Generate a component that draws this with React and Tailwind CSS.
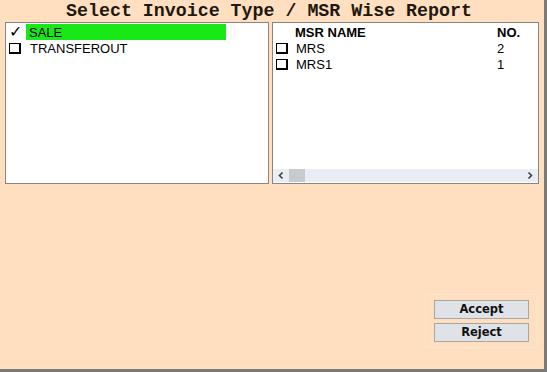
import React from 'react';

const Box = () => (
  <span className="inline-block w-[12px] h-[11px] border border-black border-r-[2px] border-b-[2px] bg-white shrink-0" />
);

const Chev = ({ dir }) => (
  <svg width="16" height="13" viewBox="0 0 16 13" className="shrink-0">
    <path d={dir === 'l' ? 'M9.5 3.5 L6.5 6.5 L9.5 9.5' : 'M6.5 3.5 L9.5 6.5 L6.5 9.5'} fill="none" stroke="#404040" strokeWidth="1.6" />
  </svg>
);

export default function App() {
  return (
    <div className="w-[547px] h-[372px] bg-[#ffdfc0] border-r-[3px] border-b-[3px] border-[#7a7a7a] flex flex-col" style={{ fontFamily: '"Liberation Sans", Arial, sans-serif' }}>
      {/* title */}
      <div className="h-[22px] flex items-center justify-center pr-[6px] text-[18.3px] font-bold text-[#201810] leading-none" style={{ fontFamily: '"Liberation Mono", "Courier New", monospace' }}>
        Select Invoice Type / MSR Wise Report
      </div>

      <div className="flex gap-[3px] px-[5px]">
        {/* invoice type list */}
        <div className="w-[265px] h-[162px] bg-white border border-[#8a8580] pt-[1px] text-[13px] text-black">
          <div className="h-[16px] flex items-center">
            <span className="w-[20px] pl-[3px] text-[16px] leading-none">✓</span>
            <span className="w-[200px] h-[16px] bg-[#18e818] pl-[3px] flex items-center leading-none">SALE</span>
          </div>
          <div className="h-[16px] flex items-center pl-[3px] gap-[9px] leading-none">
            <Box />
            <span>TRANSFEROUT</span>
          </div>
        </div>

        {/* msr list */}
        <div className="w-[268px] h-[162px] bg-white border border-[#8a8580] flex flex-col text-[13px] text-black">
          <div className="flex-1">
            <div className="h-[17px] flex items-end font-bold leading-none pb-[1px]">
              <span className="pl-[22px] w-[224px]">MSR NAME</span>
              <span>NO.</span>
            </div>
            {[['MRS', '2'], ['MRS1', '1']].map(([n, c]) => (
              <div key={n} className="h-[16px] flex items-center leading-none">
                <span className="w-[224px] flex items-center gap-[8px] pl-[3px]">
                  <Box />
                  <span>{n}</span>
                </span>
                <span>{c}</span>
              </div>
            ))}
          </div>
          <div className="h-[13px] mb-[1px] bg-[#e8eef3] flex items-center">
            <Chev dir="l" />
            <span className="w-[16px] h-[13px] bg-[#c6cbd0]" />
            <span className="flex-1" />
            <Chev dir="r" />
          </div>
        </div>
      </div>

      <div className="flex-1 flex justify-end items-end pr-[6px] pb-[21px]">
        <div className="w-[113px] border border-[#fbe6d0] px-[8px] py-[5px] flex flex-col gap-[4px]" style={{ fontFamily: '"DejaVu Sans", Tahoma, sans-serif' }}>
          <button className="h-[19px] bg-[#dfe3e8] border border-[#a9a59f] text-[11.5px] font-bold text-[#111]">Accept</button>
          <button className="h-[19px] bg-[#dfe3e8] border border-[#a9a59f] text-[11.5px] font-bold text-[#111]">Reject</button>
        </div>
      </div>
    </div>
  );
}
